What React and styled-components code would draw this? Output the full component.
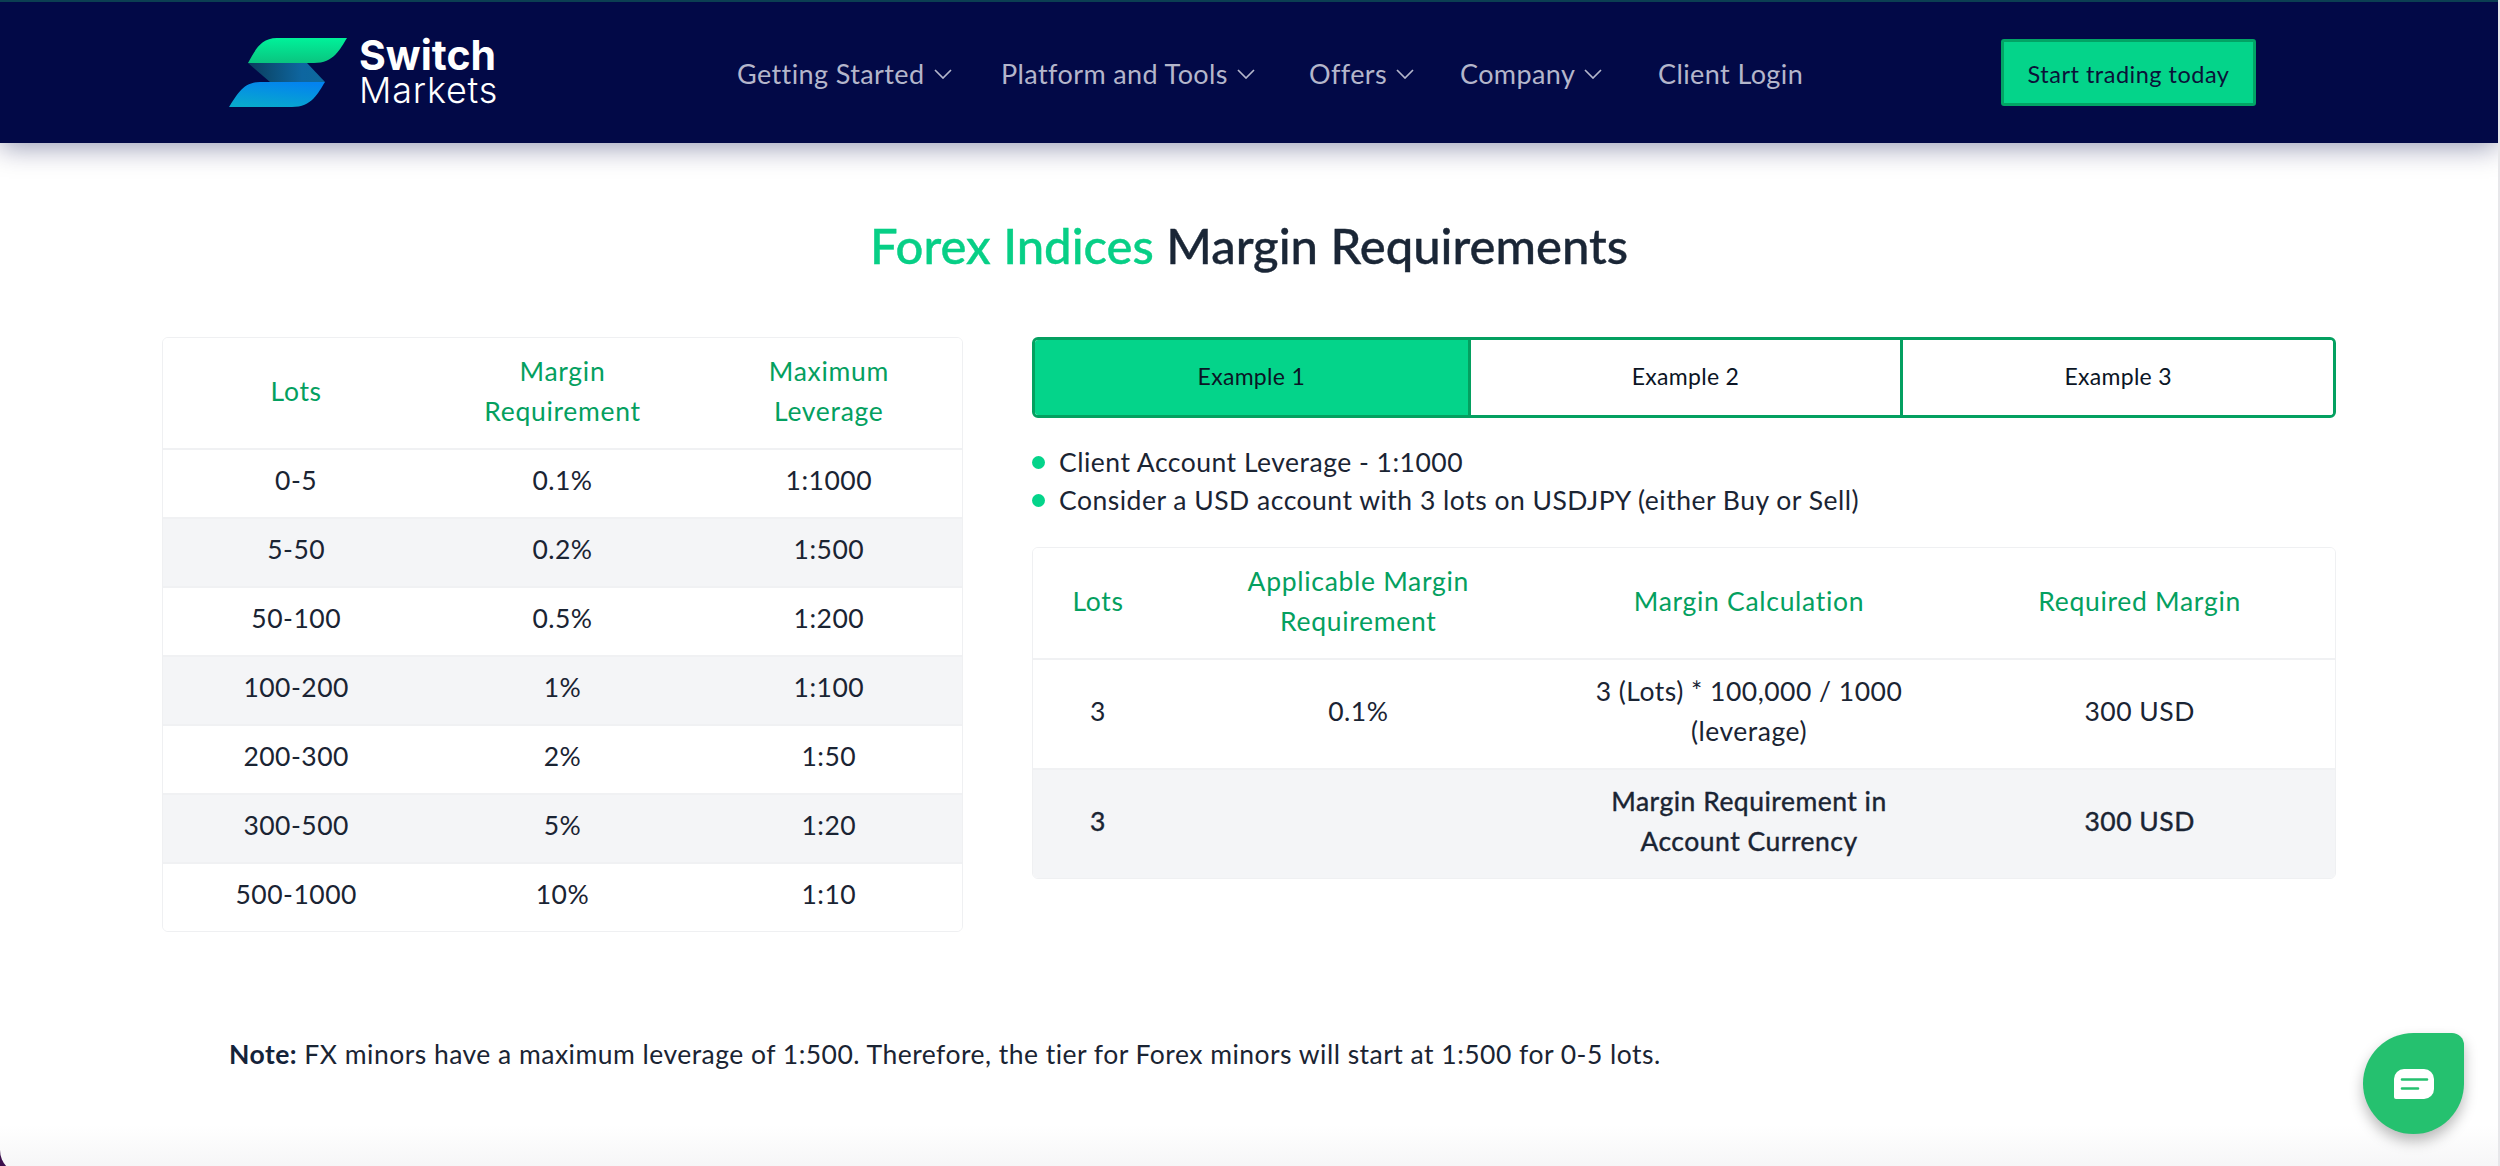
import React from "react";
import styled, { createGlobalStyle } from "styled-components";

const GlobalStyle = createGlobalStyle`
  html, body { margin: 0; padding: 0; }
  body { font-family: "Lato", "Open Sans", sans-serif; overflow: hidden; }
  * { box-sizing: border-box; }
`;
const Screen = styled.div`
  width: 2500px; height: 1166px;
  background: linear-gradient(to right, #3b0f4c 0 20px, #e7e7ea 20px);
  overflow: hidden;
`;
const Frame = styled.div`
  position: relative;
  width: 2498px; height: 1174px;
  border-bottom-left-radius: 24px;
  background: linear-gradient(to bottom, #fff 0 1125px, #f6f6f7 1166px);
  overflow: hidden;
`;
const Header = styled.header`
  position: relative;
  display: flex; align-items: center;
  height: 143px;
  padding-left: 229px;
  background: #020947;
  border-top: 2px solid #0b3f52;
  box-shadow: 0 4px 26px rgba(2, 9, 71, 0.42);
`;
const LogoLink = styled.a`
  display: flex; align-items: center; gap: 12px;
  width: 508px;
  color: #fff;
`;
const LogoText = styled.div`
  display: flex; flex-direction: column;
  font-family: "Inter", sans-serif;
`;
const LogoWord = styled.span`
  font-size: ${(p) => p.$size}px;
  font-weight: ${(p) => p.$weight};
  letter-spacing: ${(p) => p.$spacing}px;
  line-height: 35px;
`;
const Nav = styled.nav`
  display: grid;
  grid-template-columns: 264px 308px 151px 198px 1fr;
  align-items: center;
  width: 1264px;
  padding-top: 2px;
`;
const NavItem = styled.a`
  display: flex; align-items: center; gap: 9px;
  font-size: 27px;
  letter-spacing: 0.4px;
  color: #b4b6cb;
  white-space: nowrap;
`;
const TradeButton = styled.button`
  width: 255px; height: 67px;
  padding: 2px 0 0;
  font-family: inherit;
  font-size: 23.5px;
  letter-spacing: 0.5px;
  color: #0a1238;
  background: #04d48a;
  border: 3px solid #02a465;
  border-radius: 3px;
`;
const Title = styled.h1`
  margin: 72px 0 62px;
  height: 60px;
  font-size: 49px;
  line-height: 60px;
  font-weight: 500;
  -webkit-text-stroke: 0.4px currentColor;
  text-align: center;
  color: #1a2636;
`;
const TitleAccent = styled.span`
  color: #07cf86;
`;
const Columns = styled.div`
  display: flex; align-items: flex-start; gap: 69px;
  padding-left: 162px;
`;
const LeftColumn = styled.div`
  width: 801px;
`;
const RightColumn = styled.div`
  width: 1304px;
`;
const Table = styled.div`
  border: 1px solid #eff0f2;
  border-radius: 6px;
  overflow: hidden;
`;
const Row = styled.div`
  display: grid;
  grid-template-columns: ${(p) => p.$columns};
  height: ${(p) => p.$height}px;
  background: ${(p) => (p.$shaded ? "#f4f5f7" : "#fff")};
  border-top: ${(p) => (p.$first ? "none" : "2px solid #f0f1f3")};
`;
const Cell = styled.div`
  display: flex; align-items: center; justify-content: center;
  padding: 0 10px ${(p) => (p.$head ? 5 : 7)}px;
  font-size: 26.5px;
  line-height: 40px;
  letter-spacing: ${(p) => (p.$head ? 0.7 : 0.5)}px;
  text-align: center;
  color: ${(p) => (p.$head ? "#04a05f" : "#1a2433")};
  -webkit-text-stroke: ${(p) => (p.$strong ? "0.4px currentColor" : "0")};
`;
const Tabs = styled.div`
  display: grid;
  grid-template-columns: repeat(3, 1fr);
  height: 81px;
  border: 3px solid #04a060;
  border-radius: 6px;
  overflow: hidden;
`;
const Tab = styled.div`
  display: flex; align-items: center; justify-content: center;
  padding-bottom: 4px;
  font-size: 23px;
  letter-spacing: 0.3px;
  color: #0b1525;
  background: ${(p) => (p.$active ? "#04d48a" : "#fff")};
  border-left: ${(p) => (p.$first ? "none" : "3px solid #04a060")};
`;
const Bullets = styled.ul`
  margin: 25px 0 28px;
  padding: 0;
  list-style: none;
`;
const Bullet = styled.li`
  display: flex; align-items: center; gap: 14px;
  height: 38px;
  font-size: 26.5px;
  letter-spacing: 0.5px;
  color: #1a2433;
  &::before {
    content: "";
    width: 13px; height: 13px;
    border-radius: 50%;
    background: #04d48a;
  }
`;
const Note = styled.p`
  margin: 102px 0 0 229px;
  font-size: 26.5px;
  line-height: 40px;
  letter-spacing: 0.48px;
  color: #1a2433;
`;
const NoteLabel = styled.strong`
  color: #14233a;
`;
const ChatButton = styled.button`
  position: absolute;
  left: 2363px; top: 1033px;
  display: flex; align-items: center; justify-content: center;
  width: 101px; height: 101px;
  padding: 0;
  background: #25c16f;
  border: none;
  border-radius: 50% 12px 50% 50%;
  box-shadow: 0 7px 14px rgba(0, 0, 0, 0.28);
`;

const Chevron = () => (
  <svg width="18" height="10" viewBox="0 0 18 10" fill="none" stroke="#b4b6cb" strokeWidth="1.7">
    <path d="M1 1l8 8 8-8" />
  </svg>
);

const Logo = () => (
  <svg width="118" height="69" viewBox="0 0 118 69">
    <defs>
      <linearGradient id="lgTop" x1="0" y1="0" x2="0" y2="1">
        <stop offset="0" stopColor="#00f29a" />
        <stop offset="1" stopColor="#0ac47f" />
      </linearGradient>
      <linearGradient id="lgMid" x1="0" y1="0" x2="1" y2="0">
        <stop offset="0" stopColor="#0a3a5c" />
        <stop offset="0.3" stopColor="#0c4f78" />
        <stop offset="0.7" stopColor="#0e66a0" />
        <stop offset="1" stopColor="#0d6a9e" />
      </linearGradient>
      <linearGradient id="lgBot" x1="0.7" y1="0" x2="0.3" y2="1">
        <stop offset="0" stopColor="#0383ef" />
        <stop offset="1" stopColor="#08a9cd" />
      </linearGradient>
    </defs>
    <path d="M19 25C26 13 31 0 48 0h70c-7 11-13 25-33 25z" fill="url(#lgTop)" />
    <path d="M19 25h59l18 19H41z" fill="url(#lgMid)" />
    <path d="M0 69C8 57 14 44 31 44h65c-7 11-13 25-33 25z" fill="url(#lgBot)" />
  </svg>
);

const ChatIcon = () => (
  <svg width="40" height="30" viewBox="0 0 40 30">
    <path d="M10 0h20a10 10 0 0 1 10 10v10a10 10 0 0 1-10 10H2a2 2 0 0 1-2-2V10A10 10 0 0 1 10 0z" fill="#fff" />
    <path d="M8 10.500h25M8 19.500h16" stroke="#25c16f" strokeWidth="2.600" strokeLinecap="round" />
  </svg>
);

const navItems = [
  ["Getting Started", true],
  ["Platform and Tools", true],
  ["Offers", true],
  ["Company", true],
  ["Client Login", false],
];

const tierRows = [
  ["0-5", "0.1%", "1:1000"],
  ["5-50", "0.2%", "1:500"],
  ["50-100", "0.5%", "1:200"],
  ["100-200", "1%", "1:100"],
  ["200-300", "2%", "1:50"],
  ["300-500", "5%", "1:20"],
  ["500-1000", "10%", "1:10"],
];

const tierColumns = "repeat(3, 1fr)";
const exampleColumns = "130px repeat(3, 1fr)";

const App = () => {
  return (
    <Screen>
      <GlobalStyle />
      <Frame>
        <Header>
          <LogoLink>
            <Logo />
            <LogoText>
              <LogoWord $size={41} $weight={700} $spacing={0}>Switch</LogoWord>
              <LogoWord $size={36} $weight={300} $spacing={0.8}>Markets</LogoWord>
            </LogoText>
          </LogoLink>
          <Nav>
            {navItems.map(([label, hasMenu]) => (
              <NavItem key={label}>
                {label}
                {hasMenu && <Chevron />}
              </NavItem>
            ))}
          </Nav>
          <TradeButton>Start trading today</TradeButton>
        </Header>

        <Title>
          <TitleAccent>Forex Indices</TitleAccent> Margin Requirements
        </Title>

        <Columns>
          <LeftColumn>
            <Table>
              <Row $columns={tierColumns} $height={110} $first>
                <Cell $head>Lots</Cell>
                <Cell $head>Margin<br />Requirement</Cell>
                <Cell $head>Maximum<br />Leverage</Cell>
              </Row>
              {tierRows.map((row, index) => (
                <Row key={row[0]} $columns={tierColumns} $height={69} $shaded={index % 2 === 1}>
                  {row.map((value) => (
                    <Cell key={value}>{value}</Cell>
                  ))}
                </Row>
              ))}
            </Table>
          </LeftColumn>

          <RightColumn>
            <Tabs>
              <Tab $active $first>Example 1</Tab>
              <Tab>Example 2</Tab>
              <Tab>Example 3</Tab>
            </Tabs>
            <Bullets>
              <Bullet>Client Account Leverage - 1:1000</Bullet>
              <Bullet>Consider a USD account with 3 lots on USDJPY (either Buy or Sell)</Bullet>
            </Bullets>
            <Table>
              <Row $columns={exampleColumns} $height={110} $first>
                <Cell $head>Lots</Cell>
                <Cell $head>Applicable Margin<br />Requirement</Cell>
                <Cell $head>Margin Calculation</Cell>
                <Cell $head>Required Margin</Cell>
              </Row>
              <Row $columns={exampleColumns} $height={110}>
                <Cell>3</Cell>
                <Cell>0.1%</Cell>
                <Cell>3 (Lots) * 100,000 / 1000<br />(leverage)</Cell>
                <Cell>300 USD</Cell>
              </Row>
              <Row $columns={exampleColumns} $height={110} $shaded>
                <Cell $strong>3</Cell>
                <Cell />
                <Cell $strong>Margin Requirement in<br />Account Currency</Cell>
                <Cell $strong>300 USD</Cell>
              </Row>
            </Table>
          </RightColumn>
        </Columns>

        <Note>
          <NoteLabel>Note:</NoteLabel> FX minors have a maximum leverage of 1:500. Therefore, the tier for Forex minors will start at 1:500 for 0-5 lots.
        </Note>

        <ChatButton aria-label="Chat">
          <ChatIcon />
        </ChatButton>
      </Frame>
    </Screen>
  );
};

export default App;
